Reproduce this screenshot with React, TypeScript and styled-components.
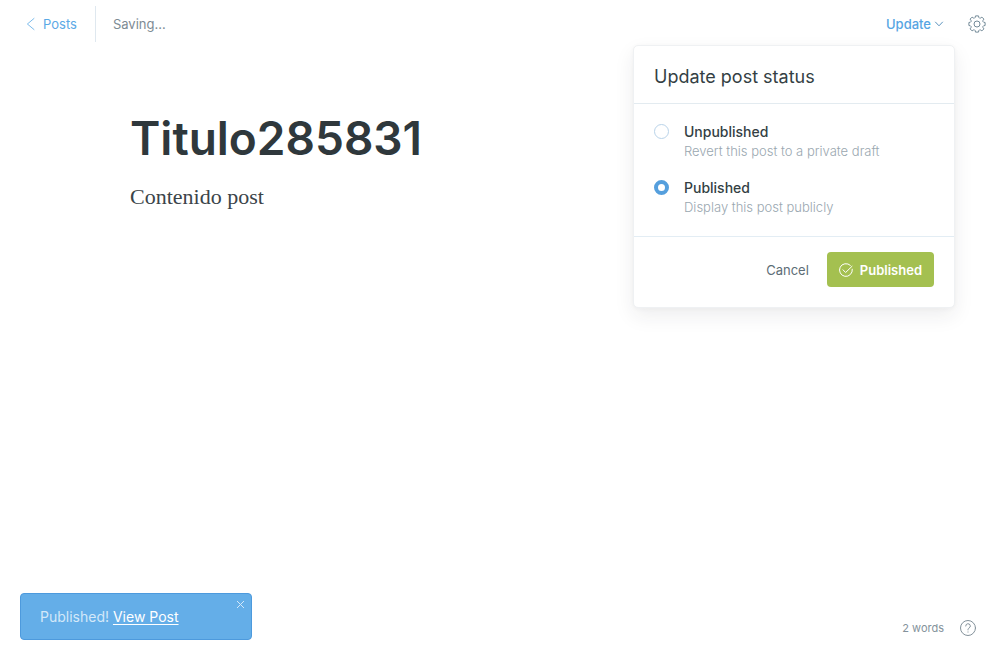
import React, { useState } from "react";
import styled, { createGlobalStyle } from "styled-components";

const GlobalStyle = createGlobalStyle`
  *, *::before, *::after { box-sizing: border-box; }
  body {
    margin: 0;
    background: #fff;
    color: #343f44;
    font-family: Inter, "Liberation Sans", sans-serif;
    font-size: 13px;
    line-height: 20px;
    -webkit-font-smoothing: antialiased;
  }
  button {
    padding: 0;
    border: 0;
    background: none;
    color: inherit;
    font: inherit;
    cursor: pointer;
  }
  h1, h2, p { margin: 0; }
  svg { display: block; flex: none; }
`;

const Page = styled.div`
  display: flex;
  flex-direction: column;
  min-height: 100vh;
`;

const TopBar = styled.header`
  display: flex;
  align-items: center;
  justify-content: space-between;
  height: 48px;
  padding: 0 14px 0 26px;
`;

const BarGroup = styled.div<{ $gap: number }>`
  display: flex;
  align-items: center;
  gap: ${(p) => p.$gap}px;
`;

const BackLink = styled.a`
  display: flex;
  align-items: center;
  gap: 8px;
  height: 36px;
  padding-right: 18px;
  border-right: 1px solid #dfe8ef;
  color: #5ba9e6;
  text-decoration: none;
`;

const SaveStatus = styled.span`
  color: #7d8b94;
`;

const Dropdown = styled.div`
  position: relative;
`;

const UpdateButton = styled.button`
  display: flex;
  align-items: center;
  gap: 3px;
  color: #56a5e3;
  font-weight: 500;
`;

const Panel = styled.form`
  position: absolute;
  top: 31px;
  right: -11px;
  width: 322px;
  border: 1px solid #eff1f3;
  border-radius: 5px;
  background: #fff;
  box-shadow: 0 8px 20px rgba(39, 44, 49, 0.08), 0 1px 4px rgba(39, 44, 49, 0.04);
`;

const PanelTitle = styled.h2`
  padding: 19px 20px 14px;
  border-bottom: 1px solid #e3ebf0;
  font-size: 18px;
  font-weight: 400;
  line-height: 24px;
`;

const Options = styled.div`
  display: flex;
  flex-direction: column;
  gap: 18px;
  padding: 18px 20px 20px;
`;

const Option = styled.label`
  display: flex;
  align-items: flex-start;
  gap: 15px;
  cursor: pointer;
`;

const Radio = styled.input`
  appearance: none;
  flex: none;
  width: 15px;
  height: 15px;
  margin: 2px 0 0;
  border: 1px solid #b9d3e9;
  border-radius: 50%;
  background: #fff;

  &:checked {
    border: 4px solid #559fdd;
  }
`;

const OptionText = styled.span`
  display: flex;
  flex-direction: column;
`;

const OptionName = styled.span`
  font-size: 14px;
  font-weight: 500;
`;

const OptionHint = styled.span`
  color: #9aa7b0;
  font-weight: 300;
  line-height: 18px;
`;

const PanelFooter = styled.div`
  display: flex;
  align-items: center;
  justify-content: flex-end;
  gap: 18px;
  padding: 15px 20px 20px;
  border-top: 1px solid #e3edf4;
`;

const CancelButton = styled.button`
  color: #5d6d76;
`;

const PublishButton = styled.button`
  display: flex;
  align-items: center;
  gap: 7px;
  height: 35px;
  padding: 0 12px;
  border-radius: 4px;
  background: #a4c050;
  color: #fff;
  font-weight: 600;
`;

const Editor = styled.main`
  flex: 1;
  width: 100%;
  max-width: 740px;
  margin: 0 auto;
  padding: 60px 0 0;
`;

const PostTitle = styled.h1`
  color: #2f383c;
  font-size: 46px;
  font-weight: 600;
  line-height: 60px;
`;

const PostBody = styled.p`
  margin-top: 14px;
  color: #3b4449;
  font-family: Georgia, "Liberation Serif", serif;
  font-size: 22px;
  line-height: 30px;
`;

const BottomBar = styled.footer`
  display: flex;
  align-items: flex-end;
  justify-content: space-between;
  padding: 0 24px 20px 20px;
`;

const Toast = styled.div`
  display: flex;
  align-items: flex-start;
  justify-content: space-between;
  width: 232px;
  height: 47px;
  padding: 6px 6px 0 19px;
  border: 1px solid #4d9add;
  border-radius: 4px;
  background: #64aee8;
  color: #d3e8f9;
  font-size: 14px;
`;

const ToastText = styled.p`
  padding-top: 7px;

  a { color: #fff; text-underline-offset: 2px; }
`;

const WordInfo = styled.div`
  display: flex;
  align-items: center;
  gap: 16px;
  height: 24px;
  color: #84929b;
  font-size: 11px;
`;

const statuses = [
  { id: "draft", name: "Unpublished", hint: "Revert this post to a private draft" },
  { id: "published", name: "Published", hint: "Display this post publicly" },
];

export default function App() {
  const [status, setStatus] = useState("published");
  return (
    <Page>
      <GlobalStyle />
      <TopBar>
        <BarGroup $gap={17}>
          <BackLink href="#posts">
            <svg width="9" height="14" viewBox="0 0 9 14" fill="none" stroke="currentColor" strokeWidth="0.8" aria-hidden="true">
              <path d="M8.3 1.2 1.4 7l6.9 5.8" />
            </svg>
            Posts
          </BackLink>
          <SaveStatus>Saving...</SaveStatus>
        </BarGroup>
        <BarGroup $gap={24}>
          <Dropdown>
            <UpdateButton type="button" aria-expanded="true">
              Update
              <svg width="10" height="6" viewBox="0 0 10 6" fill="none" stroke="#5c93bd" aria-hidden="true">
                <path d="m1.2.8 3.8 4 3.8-4" />
              </svg>
            </UpdateButton>
            <Panel onSubmit={(e) => e.preventDefault()}>
              <PanelTitle>Update post status</PanelTitle>
              <Options>
                {statuses.map((s) => (
                  <Option key={s.id}>
                    <Radio type="radio" name="status" checked={status === s.id} onChange={() => setStatus(s.id)} />
                    <OptionText>
                      <OptionName>{s.name}</OptionName>
                      <OptionHint>{s.hint}</OptionHint>
                    </OptionText>
                  </Option>
                ))}
              </Options>
              <PanelFooter>
                <CancelButton type="button">Cancel</CancelButton>
                <PublishButton type="submit">
                  <svg width="14" height="14" viewBox="0 0 14 14" fill="none" stroke="currentColor" strokeLinecap="round" strokeLinejoin="round" aria-hidden="true">
                    <path d="M13.3 6.2A6.4 6.4 0 1 1 11.3 2.3" />
                    <path d="m4 6.8 2.6 2.7L13 3.3" />
                  </svg>
                  Published
                </PublishButton>
              </PanelFooter>
            </Panel>
          </Dropdown>
          <button type="button" aria-label="Settings">
            <svg width="18" height="18" viewBox="-9 -9 18 18" fill="none" stroke="#738a98" strokeLinejoin="round" aria-hidden="true">
              <path d="M-1.5-8.1H1.5L1.8-6.6Q2.4-5.4 3.6-6L4.9-6.9 6.9-4.9 6-3.6Q5.4-2.4 6.6-1.8L8.1-1.5V1.5L6.6 1.8Q5.4 2.4 6 3.6L6.9 4.9 4.9 6.9 3.6 6Q2.4 5.4 1.8 6.6L1.5 8.1H-1.5L-1.8 6.6Q-2.4 5.4-3.6 6L-4.9 6.9-6.9 4.9-6 3.6Q-5.4 2.4-6.6 1.8L-8.1 1.5V-1.5L-6.6-1.8Q-5.4-2.4-6-3.6L-6.9-4.9-4.9-6.9-3.6-6Q-2.4-5.4-1.8-6.6Z" />
              <circle r="3" />
            </svg>
          </button>
        </BarGroup>
      </TopBar>
      <Editor>
        <PostTitle>Titulo285831</PostTitle>
        <PostBody>Contenido post</PostBody>
      </Editor>
      <BottomBar>
        <Toast role="status">
          <ToastText>
            Published! <a href="#view">View Post</a>
          </ToastText>
          <button type="button" aria-label="Close">
            <svg width="9" height="9" viewBox="0 0 9 9" fill="none" stroke="currentColor" aria-hidden="true">
              <path d="m1 1 7 7M8 1 1 8" />
            </svg>
          </button>
        </Toast>
        <WordInfo>
          2 words
          <button type="button" aria-label="Help">
            <svg width="16" height="16" viewBox="0 0 16 16" fill="none" stroke="currentColor" strokeLinecap="round" aria-hidden="true">
              <circle cx="8" cy="8" r="7.5" />
              <path d="M5.7 6A2.3 2.3 0 1 1 9 8.1C8.3 8.5 8 8.9 8 9.9M8 11.9v.2" />
            </svg>
          </button>
        </WordInfo>
      </BottomBar>
    </Page>
  );
}
